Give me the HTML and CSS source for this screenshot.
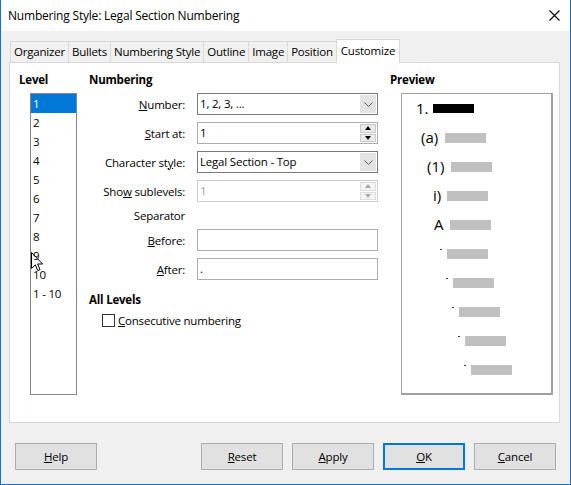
FILE: index.html
```html
<!DOCTYPE html>
<html>
<head>
<meta charset="utf-8">
<title>Numbering Style: Legal Section Numbering</title>
<link rel="stylesheet" href="styles.css">
</head>
<body>
<div class="dlg">
	<div class="titleBar">
		<span class="titleText">Numbering Style: Legal Section Numbering</span>
		<svg class="closeBtn" width="11" height="11" viewBox="0 0 11 11"><path d="M0.5 0.5L10.5 10.5M10.5 0.5L0.5 10.5" stroke="#000" stroke-width="1.1" fill="none"/></svg>
	</div>
	<div class="dlgBody">
		<div class="tabRow">
			<div class="tab">Organizer</div>
			<div class="tab">Bullets</div>
			<div class="tab">Numbering Style</div>
			<div class="tab">Outline</div>
			<div class="tab">Image</div>
			<div class="tab">Position</div>
			<div class="tab tabActive">Customize</div>
		</div>
		<div class="tabPage">
			<div class="colLevel">
				<div class="head">Level</div>
				<div class="levelList">
					<div class="lvItem lvSel">1</div>
					<div class="lvItem">2</div>
					<div class="lvItem">3</div>
					<div class="lvItem">4</div>
					<div class="lvItem">5</div>
					<div class="lvItem">6</div>
					<div class="lvItem">7</div>
					<div class="lvItem">8</div>
					<div class="lvItem">9</div>
					<div class="lvItem">10</div>
					<div class="lvItem">1 - 10</div>
					<!-- mouse pointer -->
					<svg class="pointer" width="13" height="20" viewBox="0 0 13 20"><path d="M0.5 0.5L0.5 16.5L4.3 12.8L6.8 18.6L9 17.6L6.6 12L11.6 12Z" fill="#fff" stroke="#000" stroke-width="1" stroke-linejoin="miter"/></svg>
				</div>
			</div>
			<div class="colNum">
				<div class="head">Numbering</div>
				<div class="formGrid">
					<span class="lbl"><u>N</u>umber:</span>
					<div class="combo combo-dark">
						<span class="fieldText">1, 2, 3, ...</span>
						<span class="comboBtn"><svg width="9" height="5" viewBox="0 0 9 5"><path d="M0.5 0.5L4.5 4.5L8.5 0.5" stroke="#606060" fill="none"/></svg></span>
					</div>

					<span class="lbl"><u>S</u>tart at:</span>
					<div class="combo">
						<span class="fieldText">1</span>
						<span class="spinBtns">
							<span class="spinHalf"><i class="triUp"></i></span>
							<span class="spinHalf"><i class="triDown"></i></span>
						</span>
					</div>

					<span class="lbl">Character st<u>y</u>le:</span>
					<div class="combo combo-dark">
						<span class="fieldText">Legal Section - Top</span>
						<span class="comboBtn"><svg width="9" height="5" viewBox="0 0 9 5"><path d="M0.5 0.5L4.5 4.5L8.5 0.5" stroke="#606060" fill="none"/></svg></span>
					</div>

					<span class="lbl">Sho<u>w</u> sublevels:</span>
					<div class="combo combo-off">
						<span class="fieldText">1</span>
						<span class="spinBtns">
							<span class="spinHalf"><i class="triUp"></i></span>
							<span class="spinHalf"><i class="triDown"></i></span>
						</span>
					</div>

					<span class="lbl">Separator</span>
					<span></span>

					<span class="lbl"><u>B</u>efore:</span>
					<div class="combo"><span class="fieldText"></span></div>

					<span class="lbl"><u>A</u>fter:</span>
					<div class="combo"><span class="fieldText">.</span></div>
				</div>
				<div class="head allLevels">All Levels</div>
				<div class="checkRow">
					<span class="checkBox"></span>
					<span><u>C</u>onsecutive numbering</span>
				</div>
			</div>
			<div class="colPreview">
				<div class="head">Preview</div>
				<div class="previewBox">
					<div class="pvRow"><span class="pvNum">1.</span><span class="pvBar pvBarMain"></span></div>
					<div class="pvRow"><span class="pvNum">(a)</span><span class="pvBar"></span></div>
					<div class="pvRow"><span class="pvNum">(1)</span><span class="pvBar"></span></div>
					<div class="pvRow"><span class="pvNum">i)</span><span class="pvBar"></span></div>
					<div class="pvRow"><span class="pvNum">A</span><span class="pvBar"></span></div>
					<div class="pvRow"><span class="pvNum"><i class="pvDot"></i></span><span class="pvBar"></span></div>
					<div class="pvRow"><span class="pvNum"><i class="pvDot"></i></span><span class="pvBar"></span></div>
					<div class="pvRow"><span class="pvNum"><i class="pvDot"></i></span><span class="pvBar"></span></div>
					<div class="pvRow"><span class="pvNum"><i class="pvDot"></i></span><span class="pvBar"></span></div>
					<div class="pvRow"><span class="pvNum"><i class="pvDot"></i></span><span class="pvBar"></span></div>
				</div>
			</div>
		</div>
		<div class="btnRow">
			<button class="btn"><u>H</u>elp</button>
			<div class="btnGroup">
				<button class="btn"><u>R</u>eset</button>
				<button class="btn"><u>A</u>pply</button>
				<button class="btn btnDefault"><u>O</u>K</button>
				<button class="btn"><u>C</u>ancel</button>
			</div>
		</div>
	</div>
</div>
</body>
</html>
```

FILE: styles.css
```css
body{
	margin:0;
	font-family:"Open Sans","Liberation Sans",sans-serif;
	font-size:11.5px;
	letter-spacing:-0.2px;
	color:#000;
}
u{
	text-decoration:underline;
	text-underline-offset:1px;
}
.dlg{
	width:571px;
	height:485px;
	box-sizing:border-box;
	border:1px solid #1a6ec0;
	border-top:none;
	background:#f0f0f0;
	display:flex;
	flex-direction:column;
}
.titleBar{
	height:31px;
	flex:none;
	background:#fff;
	display:flex;
	align-items:center;
	justify-content:space-between;
	padding:0 10px 0 7px;
}
.titleText{
	font-size:12px;
}
.dlgBody{
	flex:1;
	padding:8px 10px 0 8px;
	display:flex;
	flex-direction:column;
}

/* tabs */
.tabRow{
	display:flex;
	align-items:flex-end;
	height:24px;
	margin:0 0 -1px 1px;
	position:relative;
	z-index:1;
}
.tab{
	height:21px;
	box-sizing:border-box;
	margin-bottom:1px;
	padding:0 3px;
	border:1px solid #d9d9d9;
	border-bottom:none;
	margin-right:-1px;
	background:#f0f0f0;
	line-height:19px;
	white-space:nowrap;
}
.tabActive{
	height:24px;
	margin-bottom:0;
	background:#fff;
	line-height:21px;
	padding:0 4px;
}
.tabPage{
	height:361px;
	box-sizing:border-box;
	border:1px solid #d9d9d9;
	background:#fff;
	display:flex;
	padding:9px 0 0 9px;
}
.head{
	font-weight:bold;
	line-height:15px;
	height:15px;
	margin-bottom:6px;
}

/* level list */
.colLevel{
	width:70px;
}
.levelList{
	margin-left:11px;
	width:47px;
	height:302px;
	box-sizing:border-box;
	border:1px solid #82878f;
	position:relative;
}
.lvItem{
	height:19px;
	line-height:19px;
	padding-left:2px;
	position:relative;
	z-index:1;
}
.lvSel{
	background:#0078d7;
	color:#fff;
}
.pointer{
	position:absolute;
	left:0;
	top:158px;
	z-index:0;
}

/* numbering form */
.colNum{
	width:301px;
}
.formGrid{
	display:grid;
	grid-template-columns:96px 181px;
	grid-template-rows:22px 22px 22px 22px 13px 22px 22px;
	column-gap:12px;
	row-gap:7px;
}
.lbl{
	text-align:right;
	align-self:center;
	white-space:nowrap;
}
.combo{
	display:flex;
	height:22px;
	box-sizing:border-box;
	border:1px solid #acacac;
	background:#fff;
}
.combo-dark{
	border-color:#7a7a7a;
}
.combo-off{
	border-color:#cccccc;
	color:#a0a0a0;
}
.fieldText{
	flex:1;
	padding-left:2px;
	line-height:20px;
	white-space:nowrap;
}
.comboBtn{
	width:16px;
	margin:1px;
	background:#e3e3e3;
	display:flex;
	align-items:center;
	justify-content:center;
}
.spinBtns{
	width:16px;
	margin:1px;
	display:flex;
	flex-direction:column;
	gap:1px;
}
.spinHalf{
	flex:1;
	background:#e9e9e9;
	border:1px solid #c8c8c8;
	display:flex;
	align-items:center;
	justify-content:center;
}
.triUp{
	width:0;
	height:0;
	border-left:3.5px solid transparent;
	border-right:3.5px solid transparent;
	border-bottom:4px solid #000;
}
.triDown{
	width:0;
	height:0;
	border-left:3.5px solid transparent;
	border-right:3.5px solid transparent;
	border-top:4px solid #000;
}
.combo-off .spinHalf{
	background:#f4f4f4;
	border-color:#dddddd;
}
.combo-off .triUp{
	border-bottom-color:#a8a8a8;
}
.combo-off .triDown{
	border-top-color:#a8a8a8;
}
.allLevels{
	margin-top:12px;
	margin-bottom:6px;
}
.checkRow{
	display:flex;
	align-items:center;
	height:15px;
	padding-left:13px;
	gap:3px;
}
.checkBox{
	width:13px;
	height:13px;
	box-sizing:border-box;
	border:1px solid #333;
	background:#fff;
}

/* preview */
.colPreview{
	flex:1;
}
.previewBox{
	margin-left:11px;
	width:152px;
	height:302px;
	box-sizing:border-box;
	border:1px solid #a0a0a0;
	border-bottom-width:2px;
	border-right-width:2px;
}
.pvRow{
	height:29px;
	display:flex;
	align-items:center;
	font-size:15px;
	letter-spacing:0;
	line-height:1;
}
.pvNum{
	display:flex;
	align-items:center;
}
.pvBar{
	width:41px;
	height:10px;
	background:#c0c0c0;
}
.pvBarMain{
	background:#000;
	height:9px;
}
.pvDot{
	display:block;
	width:2px;
	height:1px;
	background:#6b3a10;
	margin-bottom:8px;
}
.pvRow:nth-child(1){ padding-left:14px; }
.pvRow:nth-child(1) .pvNum{ width:17px; }
.pvRow:nth-child(2){ padding-left:19px; }
.pvRow:nth-child(2) .pvNum{ width:24px; }
.pvRow:nth-child(3){ padding-left:25px; }
.pvRow:nth-child(3) .pvNum{ width:24px; }
.pvRow:nth-child(4){ padding-left:31px; }
.pvRow:nth-child(4) .pvNum{ width:14px; }
.pvRow:nth-child(5){ padding-left:32px; }
.pvRow:nth-child(5) .pvNum{ width:16px; }
.pvRow:nth-child(6){ padding-left:38px; }
.pvRow:nth-child(7){ padding-left:44px; }
.pvRow:nth-child(8){ padding-left:50px; }
.pvRow:nth-child(9){ padding-left:56px; }
.pvRow:nth-child(10){ padding-left:62px; }
.pvRow:nth-child(n+6) .pvNum{ width:7px; }

/* buttons */
.btnRow{
	display:flex;
	justify-content:space-between;
	margin:20px 4px 0 6px;
}
.btnGroup{
	display:flex;
	gap:9px;
}
.btn{
	width:82px;
	height:27px;
	box-sizing:border-box;
	background:#e1e1e1;
	border:1px solid #adadad;
	font-family:inherit;
	font-size:11.5px;
	letter-spacing:inherit;
	color:#000;
	padding:0;
}
.btnDefault{
	border:2px solid #0078d7;
}
```
